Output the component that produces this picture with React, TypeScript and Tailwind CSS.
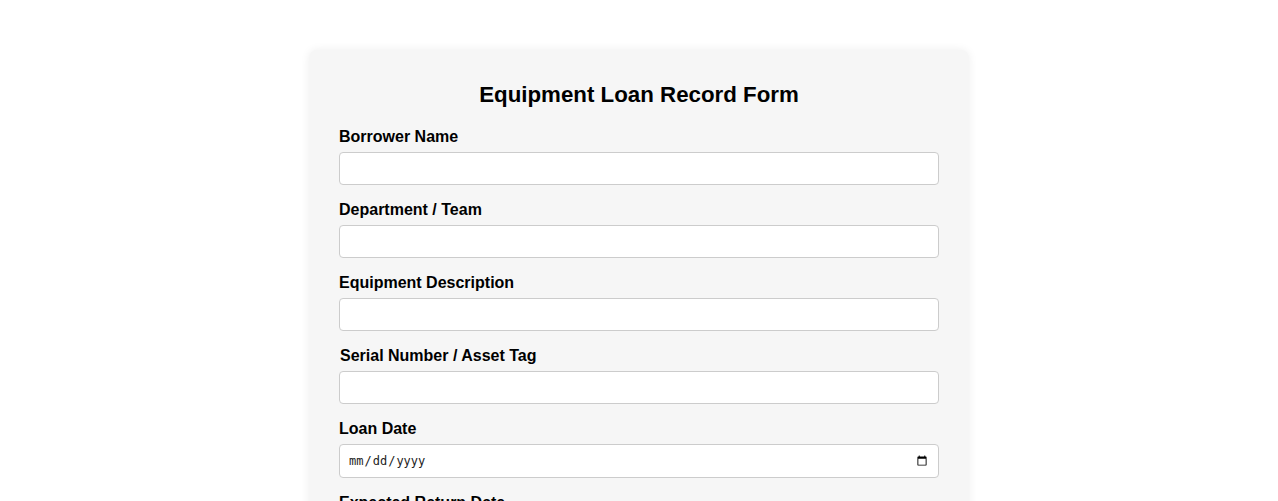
const fields = [
  { label: 'Borrower Name', type: 'text', indent: false },
  { label: 'Department / Team', type: 'text', indent: false },
  { label: 'Equipment Description', type: 'text', indent: false },
  { label: 'Serial Number / Asset Tag', type: 'text', indent: true },
  { label: 'Loan Date', type: 'date', indent: false },
  { label: 'Expected Return Date', type: 'date', indent: false },
  { label: 'Condition at Loan', type: 'text', indent: false },
];

export default function App() {
  return (
    <div className="min-h-screen bg-white pt-[50px] font-['Liberation_Sans',Arial,sans-serif] text-black">
      <div className="mx-auto w-[660px] rounded-lg bg-[#f6f6f6] p-[30px] shadow-[0_0_10px_rgba(0,0,0,0.07)]">
        <h2 className="mt-[2px] mb-[21px] text-center text-[22.3px] leading-[25px] font-bold">
          Equipment Loan Record Form
        </h2>
        <form className="flex flex-col gap-[16px]">
          {fields.map((f) => (
            <div key={f.label} className="flex flex-col">
              <label
                className={
                  f.indent
                    ? 'mb-[6px] pl-[1px] text-base leading-[18px] font-bold'
                    : 'mb-[6px] text-base leading-[18px] font-bold'
                }
              >
                {f.label}
              </label>
              {f.type === 'date' ? (
                <input
                  type="date"
                  className="h-[34px] w-full rounded border border-[#ccc] bg-white px-2 font-['DejaVu_Sans_Mono',monospace] text-[12px] text-[#222]"
                />
              ) : (
                <input
                  type="text"
                  className="h-[33px] w-full rounded border border-[#ccc] bg-white px-2 text-sm"
                />
              )}
            </div>
          ))}
        </form>
      </div>
    </div>
  );
}
